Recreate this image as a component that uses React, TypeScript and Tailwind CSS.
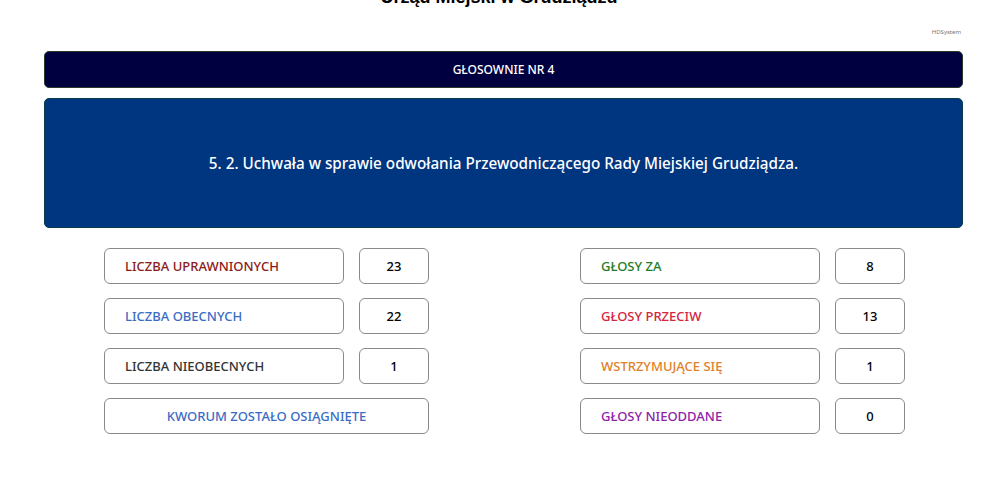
import React from 'react';

const left = [
  { label: 'LICZBA UPRAWNIONYCH', value: '23', color: 'text-[#8b1a1a]' },
  { label: 'LICZBA OBECNYCH', value: '22', color: 'text-[#3b6cc4]' },
  { label: 'LICZBA NIEOBECNYCH', value: '1', color: 'text-[#333333]' },
];

const right = [
  { label: 'GŁOSY ZA', value: '8', color: 'text-[#1e7b27]' },
  { label: 'GŁOSY PRZECIW', value: '13', color: 'text-[#d3263f]' },
  { label: 'WSTRZYMUJĄCE SIĘ', value: '1', color: 'text-[#e0812a]' },
  { label: 'GŁOSY NIEODDANE', value: '0', color: 'text-[#8e24aa]' },
];

function Row({ label, value, color }: { label: string; value: string; color: string }) {
  return (
    <div className="flex gap-[15px] h-[36px]">
      <div className={`w-[240px] h-full flex items-center pl-[20px] pt-[1px] border border-[#8a8a8a] rounded-[6px] text-[13px] font-medium ${color}`}>
        {label}
      </div>
      <div className="w-[70px] h-full flex items-center justify-center pt-[1px] border border-[#8a8a8a] rounded-[6px] text-[13px] font-medium text-black">
        {value}
      </div>
    </div>
  );
}

export default function App() {
  return (
    <div className="w-[998px] h-[503px] bg-white overflow-hidden font-['Noto_Sans',sans-serif]">
      {/* title, scrolled partly out of view */}
      <h1 className="mt-[-13px] h-[20px] text-center text-[18px] leading-[20px] font-bold text-black font-['Liberation_Sans',Arial,sans-serif]">
        Urząd Miejski w Grudziądzu
      </h1>

      <div className="flex justify-end pr-[37px] pt-[21px] h-[37px]">
        <span className="text-[6px] leading-[8px] text-[#777777]">HDSystem</span>
      </div>

      <div className="pl-[44px] pr-[35px] pt-[7px]">
        <div className="h-[37px] bg-[#000040] rounded-[5px] border border-[#2a3a2a] flex items-center justify-center text-white text-[12px] font-medium">
          GŁOSOWNIE NR 4
        </div>

        <div className="mt-[10px] h-[130px] bg-[#00357f] rounded-[5px] border border-[#0b3b4a] flex items-center justify-center text-white text-[15.25px] font-medium">
          5. 2. Uchwała w sprawie odwołania Przewodniczącego Rady Miejskiej Grudziądza.
        </div>

        <div className="mt-[20px] flex justify-between pl-[60px] pr-[58px]">
          <div className="flex flex-col gap-[14px]">
            {left.map((r) => (
              <Row key={r.label} {...r} />
            ))}
            <div className="w-[325px] h-[36px] flex items-center justify-center pt-[1px] border border-[#8a8a8a] rounded-[6px] text-[13px] font-medium text-[#3b6cc4]">
              KWORUM ZOSTAŁO OSIĄGNIĘTE
            </div>
          </div>
          <div className="flex flex-col gap-[14px]">
            {right.map((r) => (
              <Row key={r.label} {...r} />
            ))}
          </div>
        </div>
      </div>
    </div>
  );
}
